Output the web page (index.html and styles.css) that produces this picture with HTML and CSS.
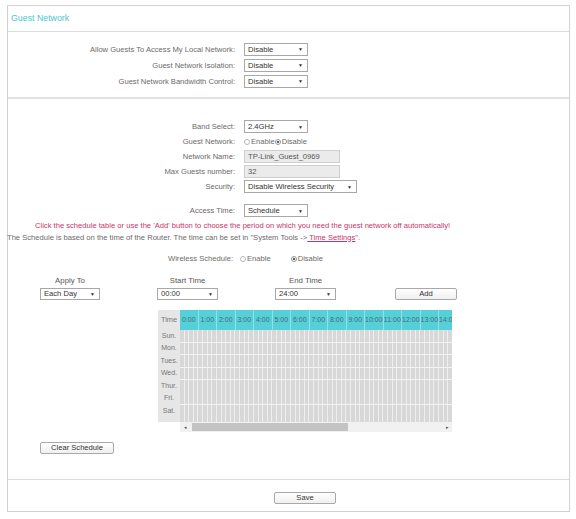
FILE: index.html
```html
<!DOCTYPE html>
<html>
<head>
<meta charset="utf-8">
<link rel="stylesheet" href="styles.css">
</head>
<body>
<div class="panel">
  <div class="head">Guest Network</div>

  <div class="sec sec1">
    <div class="frow"><label>Allow Guests To Access My Local Network:</label><div class="sel w64"><span>Disable</span><i>▼</i></div></div>
    <div class="frow"><label>Guest Network Isolation:</label><div class="sel w64"><span>Disable</span><i>▼</i></div></div>
    <div class="frow"><label>Guest Network Bandwidth Control:</label><div class="sel w64"><span>Disable</span><i>▼</i></div></div>
  </div>

  <div class="sec sec2">
    <div class="frow r15"><label>Band Select:</label><div class="sel w64"><span>2.4GHz</span><i>▼</i></div></div>
    <div class="frow r15"><label>Guest Network:</label><div class="radios"><span class="rad"></span>Enable <span class="rad on"></span>Disable</div></div>
    <div class="frow r15"><label>Network Name:</label><div class="inp">TP-Link_Guest_0969</div></div>
    <div class="frow r15"><label>Max Guests number:</label><div class="inp">32</div></div>
    <div class="frow r15"><label>Security:</label><div class="sel w113"><span>Disable Wireless Security</span><i>▼</i></div></div>
    <div class="frow r15 access"><label>Access Time:</label><div class="sel w64"><span>Schedule</span><i>▼</i></div></div>

    <p class="warn">Click the schedule table or use the 'Add' button to choose the period on which you need the guest network off automatically!</p>
    <p class="note">The Schedule is based on the time of the Router. The time can be set in "System Tools -&gt;<a> Time Settings</a>".</p>

    <div class="wrow"><label>Wireless Schedule:</label><div class="radios"><span class="rad"></span>Enable</div><div class="radios"><span class="rad on"></span>Disable</div></div>

    <div class="ctrls">
      <div class="col c1"><div class="ch">Apply To</div><div class="sel w60"><span>Each Day</span><i>▼</i></div></div>
      <div class="col c2"><div class="ch">Start Time</div><div class="sel w61"><span>00:00</span><i>▼</i></div></div>
      <div class="col c3"><div class="ch">End Time</div><div class="sel w61"><span>24:00</span><i>▼</i></div></div>
      <div class="col c4"><div class="ch">&nbsp;</div><button class="btn addbtn">Add</button></div>
    </div>

    <div class="sched">
      <div class="days">
        <div class="dh">Time</div>
        <div class="d">Sun.</div>
        <div class="d">Mon.</div>
        <div class="d">Tues.</div>
        <div class="d">Wed.</div>
        <div class="d">Thur.</div>
        <div class="d">Fri.</div>
        <div class="d">Sat.</div>
      </div>
      <div class="hours">
        <div class="hscroll">
          <div class="hhead">
            <span>0:00</span><span>1:00</span><span>2:00</span><span>3:00</span><span>4:00</span><span>5:00</span><span>6:00</span><span>7:00</span><span>8:00</span><span>9:00</span><span>10:00</span><span>11:00</span><span>12:00</span><span>13:00</span><span>14:00</span>
          </div>
          <div class="cells"></div>
        </div>
        <div class="sbar"><span class="arr">◂</span><span class="thumb"></span><span class="arr r">▸</span></div>
      </div>
    </div>

    <button class="btn clearbtn">Clear Schedule</button>
  </div>

  <div class="foot"><button class="btn savebtn">Save</button></div>
</div>
</body>
</html>
```
FILE: styles.css
```css
* { box-sizing: border-box; }
html, body { margin: 0; padding: 0; background: #fff; }
body {
  font-family: "Liberation Sans", Arial, sans-serif;
  font-size: 7.6px;
  color: #6a6a6a;
}
.panel {
  margin: 5px 0 0 7px;
  width: 563px;
  border: 1px solid #d2d2d2;
}
.head {
  height: 26px;
  line-height: 25px;
  padding-left: 3px;
  font-size: 8.8px;
  color: #4cc6d3;
  border-bottom: 1px solid #dcdcdc;
}
.sec1 {
  padding: 9px 0 8px;
  border-bottom: 2px solid #e2e2e2;
}
.frow {
  display: grid;
  grid-template-columns: 227px auto;
  column-gap: 9px;
  align-items: center;
  height: 16px;
}
.frow.r15 { height: 15px; }
.frow label { text-align: right; white-space: nowrap; }
.frow > div { justify-self: start; }
.sec2 {
  padding: 20px 0 25px;
  border-bottom: 1px solid #dcdcdc;
}
.access { margin-top: 9px; }

.sel {
  display: flex;
  align-items: center;
  justify-content: space-between;
  height: 13px;
  border: 1px solid #a8a8a8;
  background: #fff;
  color: #333;
  padding: 0 4px 0 3px;
  white-space: nowrap;
}
.sel i { font-style: normal; font-size: 5px; color: #333; }
.w64 { width: 64px; }
.w60 { width: 60px; }
.w61 { width: 61px; }
.w113 { width: 113px; }

.inp {
  width: 96px;
  height: 13px;
  line-height: 11px;
  border: 1px solid #cfcfcf;
  background: #ebebeb;
  color: #555;
  padding-left: 3px;
}
.radios { display: flex; align-items: center; white-space: nowrap; color: #6a6a6a; }
.rad {
  display: inline-block;
  width: 6px;
  height: 6px;
  border: 1px solid #b8b8b8;
  border-radius: 50%;
  margin-right: 1px;
  background: #fff;
}
.rad.on { background: radial-gradient(circle, #666 0 1.4px, #fff 1.6px); border-color: #999; }

p { margin: 0; line-height: 12px; white-space: nowrap; }
.warn { color: #c8346a; margin: 1.5px 0 0 27px; }
.note { color: #6a6a6a; margin-left: -1px; }
.note a { color: #c8346a; text-decoration: underline; }

.wrow {
  display: flex;
  align-items: center;
  height: 14px;
  margin-top: 8px;
}
.wrow label { width: 225px; text-align: right; margin-right: 7px; }
.wrow .radios + .radios { margin-left: 20px; }

.ctrls {
  display: flex;
  margin-top: 8px;
  padding-left: 32px;
}
.col { display: flex; flex-direction: column; align-items: stretch; }
.ch { text-align: center; color: #555; line-height: 13px; height: 13px; font-size: 7.8px; }
.c1 { width: 60px; }
.c2 { width: 61px; margin-left: 57px; }
.c3 { width: 61px; margin-left: 57px; }
.c4 { width: 62px; margin-left: 59px; }
.col .sel { height: 12px; margin-top: 1px; }

.btn {
  font-family: inherit;
  font-size: 7.6px;
  color: #333;
  height: 12px;
  padding: 0;
  border: 1px solid #a9a9a9;
  border-radius: 2px;
  background: linear-gradient(#ffffff, #f0f0f0);
  line-height: 10px;
}
.addbtn { width: 62px; margin-top: 1px; }
.clearbtn { display: block; width: 74px; margin: 10px 0 0 32px; }

.sched {
  display: flex;
  margin: 10px 0 0 150px;
}
.days { width: 22px; background: #e6e6e6; height: 112px; color: #777; }
.dh { height: 20px; line-height: 20px; text-align: center; font-size: 7.4px; }
.d { height: 12.5px; line-height: 12.5px; text-align: center; font-size: 7px; }
.hours { width: 272px; }
.hscroll { width: 272px; overflow: hidden; }
.hhead {
  display: flex;
  width: 444px;
  height: 20px;
  background: #55cfd9;
}
.hhead span {
  flex: 0 0 18.5px;
  display: flex;
  align-items: center;
  justify-content: center;
  white-space: nowrap;
  font-size: 7px;
  color: #4d6a6e;
  border-right: 1px solid rgba(255,255,255,0.35);
}
.cells {
  width: 444px;
  height: 92px;
  background:
    repeating-linear-gradient(180deg, transparent 0 11.5px, #f3f3f3 11.5px 12.5px),
    repeating-linear-gradient(90deg, #d8d8d8 0 3.6px, #eeeeee 3.6px 4.625px);
}
.sbar {
  display: flex;
  align-items: center;
  height: 10px;
  background: #f1f1f1;
}
.arr { width: 10px; text-align: center; font-size: 5px; color: #555; }
.arr.r { margin-left: auto; }
.thumb { width: 156px; height: 8px; background: #c3c3c3; margin-left: 2px; }

.foot {
  padding: 12px 0 7px 266px;
}
.savebtn { display: block; width: 62px; }
```
